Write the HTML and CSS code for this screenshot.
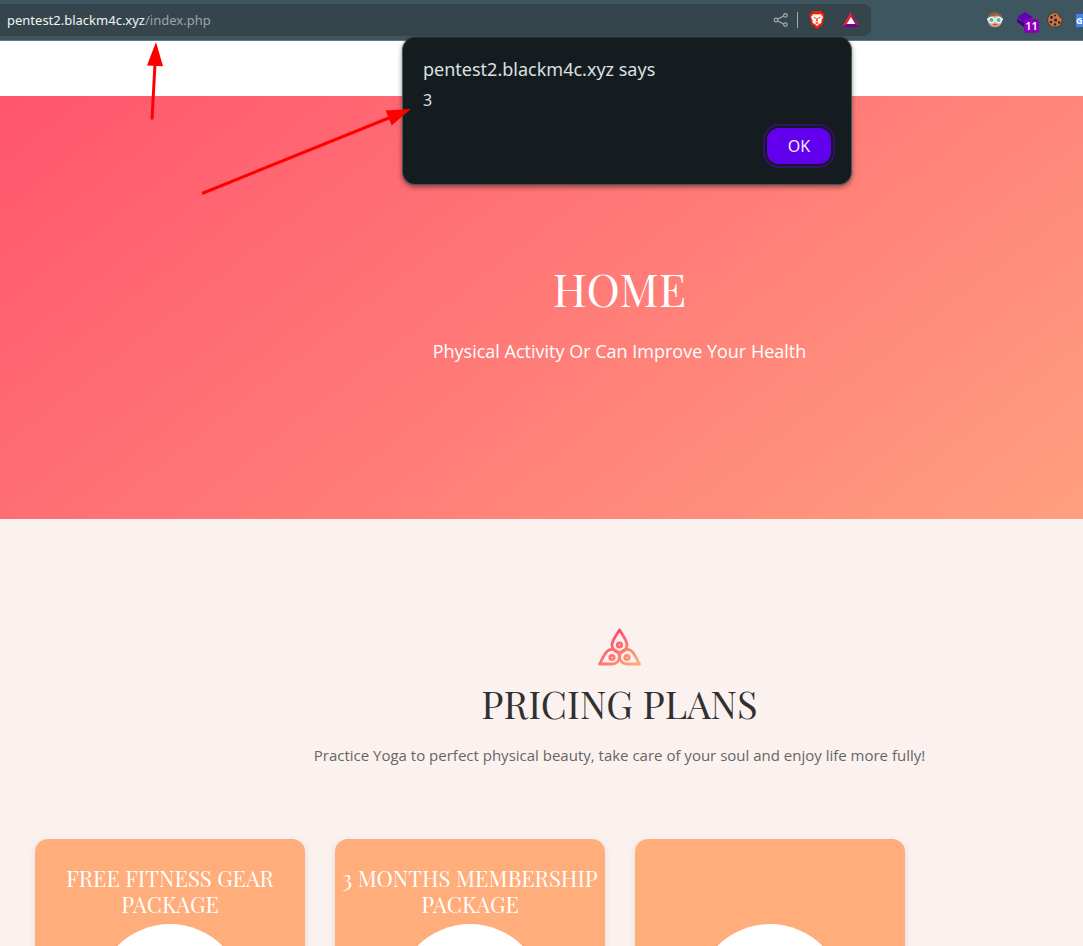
FILE: index.html
```html
<!DOCTYPE html>
<html lang="en">
<head>
<meta charset="utf-8">
<meta name="viewport" content="width=device-width, initial-scale=1">
<title>Home</title>
<link rel="stylesheet" href="styles.css">
</head>
<body>
<header class="browser-bar">
  <div class="address">
    <div class="url"><span class="host">pentest2.blackm4c.xyz</span>/index.php</div>
    <button class="icon-button" aria-label="Share">
      <svg width="16" height="16" viewBox="0 0 16 16" fill="none" stroke="#a5adb0" stroke-width="1.2"><path d="M4.6 7.2 10.6 4M4.6 9l6 3"/><circle cx="3" cy="8" r="1.8"/><circle cx="12.4" cy="3.4" r="1.8"/><circle cx="12.4" cy="12.6" r="1.8"/></svg>
    </button>
    <span class="divider"></span>
    <button class="icon-button shield" aria-label="Shields">
      <svg width="16" height="20" viewBox="0 0 16 20"><path d="M4 1h8l1.500 1.800L15.600 4l-.5 3.500-1.700 7.100L8 19l-5.400-4.400L.9 7.500.4 4l2.100-1.200z" fill="#fb1c04"/><path d="m4.500 4 3.500.6 3.500-.6 2.500 3-1.700 3.800.1 2.200-2.300 1L8 16l-2.100-2-2.300-1 .1-2.200L2 7z" fill="#fff"/><path d="m4.200 7 2.600.6-.5 1.300zM11.800 7l-2.600.6.5 1.300zM7.500 8h1l.3 3-.8.800-.8-.8zM6 12.800l2-.5 2 .5-2 1.200z" fill="#fb1c04"/></svg>
    </button>
    <button class="icon-button" aria-label="Rewards">
      <svg width="18" height="16" viewBox="0 0 18 16"><path d="M9 0 0 15l4.800-3L9 5z" fill="#ff1d36"/><path d="M9 0v5l4.200 7L18 15z" fill="#9e1f63"/><path d="m0 15 4.800-3h8.400l4.800 3z" fill="#750092"/><path d="m9 5 4.200 7H4.800z" fill="#fff"/></svg>
    </button>
  </div>
  <div class="extensions">
    <button class="icon-button" aria-label="Reader extension">
      <svg width="16" height="16" viewBox="0 0 16 16"><circle cx="8" cy="8" r="7.300" fill="#dda178"/><path d="M1.500 6C2 2 4.600.6 8 .6S14 2 14.500 6L9.800 3.300z" fill="#92613e"/><path d="M0 6.300h16v2H0z" fill="#d8f0ed"/><circle cx="4.500" cy="8" r="2.700" fill="#54aeb6" stroke="#e4f4ef" stroke-width="1.500"/><circle cx="11.500" cy="8" r="2.700" fill="#54aeb6" stroke="#e4f4ef" stroke-width="1.500"/><path d="M6 12.700h4" stroke="#aa5947" stroke-width="1.300"/></svg>
    </button>
    <button class="icon-button layers" aria-label="Layers extension, 11 items">
      <svg width="18" height="16" viewBox="0 0 18 16"><path d="M9 0 17 5 9 10.500 1 5z" fill="#6200b3"/><path d="M1 6.500 9 11l8-4.500V10l-8 6-8-6z" fill="#45008a"/></svg>
      <span class="badge">11</span>
    </button>
    <button class="icon-button" aria-label="Cookie extension">
      <svg width="16" height="16" viewBox="0 0 16 16"><path d="M8 .5c1.800-.1 2.500.4 2.800 1.500.4 1.100 1.300 1.100 1.700 2.200.4 1.200 1 1.800 2.600 1.800.7 5-2.500 9.300-7.100 9.300A7.400 7.400 0 1 1 8 .5z" fill="#c87449" stroke="#3d2925" stroke-width=".8"/><g fill="#30201f"><circle cx="4.500" cy="5.500" r="1.400"/><circle cx="8" cy="3.500" r="1"/><circle cx="8.600" cy="8" r="1.500"/><circle cx="4" cy="10" r="1.300"/><circle cx="8" cy="12.500" r="1.300"/><circle cx="12.200" cy="10.500" r="1.200"/></g></svg>
    </button>
    <button class="icon-button translate" aria-label="Translate">G</button>
  </div>
</header>

<main class="page">
  <section class="hero">
    <h1 class="hero-title">HOME</h1>
    <p class="hero-text">Physical Activity Or Can Improve Your Health</p>
  </section>
  <section class="pricing">
    <div class="pricing-head">
      <svg width="44" height="38" viewBox="0 0 44 38" fill="none" stroke="url(#flame)" stroke-width="2.800" stroke-linejoin="round">
        <defs><linearGradient id="flame" gradientUnits="userSpaceOnUse" x1="12" y1="4" x2="36" y2="38"><stop offset="0" stop-color="#ff4268"/><stop offset="1" stop-color="#ffaa78"/></linearGradient></defs>
        <path d="M21.500 2C18.500 7 14 12.500 14 17a7.500 7.500 0 0 0 15 0C29 12.500 24.500 7 21.500 2z"/>
        <path d="M1.500 36C5 31 6 24 11.500 21.800c5-1.600 10 2 10 7.200 0 4-3.300 7-7.500 7z"/>
        <path d="M41.500 36C38 31 37 24 31.500 21.800c-5-1.600-10 2-10 7.200 0 4 3.300 7 7.500 7z"/>
        <circle cx="21.500" cy="17" r="2.200"/><circle cx="14" cy="29.500" r="2.200"/><circle cx="29" cy="29.500" r="2.200"/>
      </svg>
      <h2 class="pricing-title">PRICING PLANS</h2>
      <p class="pricing-text">Practice Yoga to perfect physical beauty, take care of your soul and enjoy life more fully!</p>
    </div>
    <div class="cards">
      <article class="card"><h3 class="card-title">FREE FITNESS GEAR PACKAGE</h3><div class="disc"></div></article>
      <article class="card"><h3 class="card-title">3 MONTHS MEMBERSHIP PACKAGE</h3><div class="disc"></div></article>
      <article class="card"><h3 class="card-title"></h3><div class="disc"></div></article>
    </div>
  </section>
</main>

<div class="dialog" role="alertdialog" aria-labelledby="dialog-title" aria-describedby="dialog-message">
  <h2 class="dialog-title" id="dialog-title">pentest2.blackm4c.xyz says</h2>
  <p class="dialog-message" id="dialog-message">3</p>
  <button class="ok">OK</button>
</div>

<svg class="arrows" width="420" height="200" viewBox="0 0 420 200" fill="#f00" stroke="none" aria-hidden="true">
  <path d="M152 119.500 155 64M202 193.500 390 117.500" stroke="#f00" stroke-width="3"/>
  <path d="m156 42 7 24.300-16-.9zM411 109l-19.300 16.500-6-15z"/>
</svg>
</body>
</html>
```

FILE: styles.css
```css
* { box-sizing: border-box; }

body {
  margin: 0;
  height: 100vh;
  overflow: hidden;
  position: relative;
  background: #fff;
  font-family: "Open Sans", "Noto Sans", sans-serif;
}

h1, h2, h3, p { margin: 0; font-weight: 400; }

button {
  border: 0;
  padding: 0;
  font-family: inherit;
  cursor: pointer;
}

.browser-bar {
  display: flex;
  justify-content: space-between;
  height: 41px;
  padding: 4px 0 4px;
  background: #3e5660;
  border-bottom: 1px solid #637a84;
  font-family: "Noto Sans", sans-serif;
}

.address {
  display: flex;
  align-items: center;
  flex: 0 1 871px;
  height: 32px;
  padding: 0 11px 0 7px;
  border-radius: 0 8px 8px 0;
  background: #35454c;
}

.url {
  flex: 1;
  color: #9da5a9;
  font-size: 13px;
  line-height: 20px;
}

.host { color: #f1f4f5; }

.icon-button {
  display: flex;
  align-items: center;
  justify-content: center;
  background: none;
}

.divider {
  width: 1px;
  height: 16px;
  margin: 0 11px 0 8px;
  background: #a5adb0;
}

.shield { margin-right: 17px; }

.extensions {
  display: flex;
  flex: none;
  align-items: center;
  height: 32px;
  gap: 13px;
  overflow: hidden;
}

.layers { position: relative; }

.badge {
  position: absolute;
  left: 8px;
  top: 7px;
  width: 15px;
  height: 14px;
  border-radius: 3px;
  background: #8a00b8;
  color: #fff;
  font-size: 11px;
  font-weight: 600;
  line-height: 14px;
}

.translate {
  width: 7px;
  height: 13px;
  overflow: hidden;
  justify-content: flex-start;
  background: #4384ef;
  color: #fff;
  font-size: 9px;
  font-weight: 700;
}

.page { padding-top: 55px; }

.hero {
  padding: 162px 0 154px 156px;
  background: linear-gradient(142deg, #ff556e 0%, #ff9f80 100%);
  color: #fff;
  text-align: center;
}

.hero-title, .pricing-title, .card-title {
  font-family: "Playfair Display", "Liberation Serif", serif;
}

.hero-title { font-size: 45px; line-height: 60px; }

.hero-text {
  margin-top: 19px;
  font-size: 18px;
  line-height: 28px;
}

.pricing {
  padding: 109px 0 0;
  background: #fbf1ee;
}

.pricing-head {
  display: flex;
  flex-direction: column;
  align-items: center;
  padding-left: 156px;
  text-align: center;
}

.pricing-title {
  margin-top: 14px;
  color: #303030;
  font-size: 38px;
  line-height: 48px;
}

.pricing-text {
  margin-top: 14px;
  color: #666;
  font-size: 15px;
  line-height: 26px;
}

.cards {
  display: grid;
  grid-template-columns: repeat(3, 270px);
  gap: 30px;
  padding: 71px 0 60px 35px;
}

.card {
  display: flex;
  flex-direction: column;
  align-items: center;
  padding: 26px 5px 30px;
  border-radius: 13px;
  background: #ffad7a;
  box-shadow: 0 3px 8px rgba(0, 0, 0, 0.1);
}

.card-title {
  min-height: 52px;
  color: #fff;
  font-size: 22px;
  line-height: 26px;
  text-align: center;
}

.disc {
  width: 148px;
  height: 148px;
  margin-top: 7px;
  border-radius: 50%;
  background: #fff;
}

.dialog {
  position: absolute;
  top: 37px;
  left: 402px;
  display: flex;
  flex-direction: column;
  width: 450px;
  padding: 17px 20px 20px;
  border: 1px solid #4a5558;
  border-top-color: #20292c;
  border-radius: 13px;
  background: #151c1f;
  box-shadow: 0 2px 5px rgba(0, 0, 0, 0.45);
  color: #dce1e3;
  font-family: "Noto Sans", sans-serif;
}

.dialog-title { font-size: 18px; line-height: 28px; }

.dialog-message { font-size: 16px; line-height: 34px; }

.ok {
  align-self: flex-end;
  width: 64px;
  height: 36px;
  margin-top: 11px;
  border-radius: 12px;
  background: #6200ee;
  outline: 2px solid #35106f;
  outline-offset: 2px;
  color: #f3eaff;
  font-size: 16px;
}

.arrows {
  position: absolute;
  top: 0;
  left: 0;
  pointer-events: none;
}
```
